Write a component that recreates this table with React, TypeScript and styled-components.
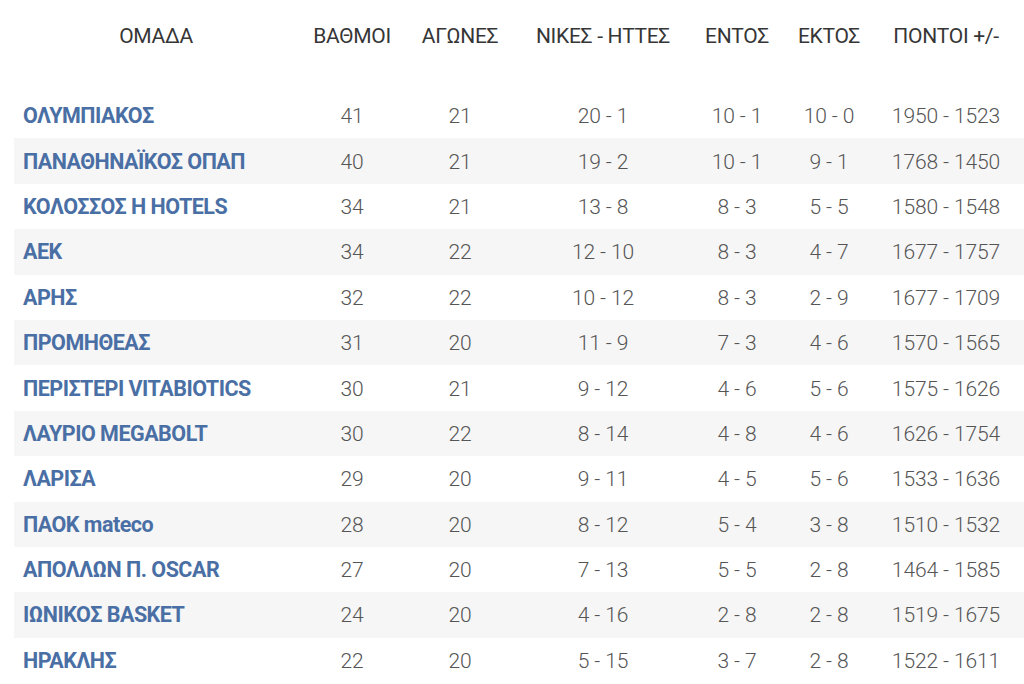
import * as React from 'react';
import styled, { createGlobalStyle } from 'styled-components';

const GlobalStyle = createGlobalStyle`
  html, body {
    margin: 0;
    padding: 0;
    background: #ffffff;
    overflow: hidden;
  }
  body {
    font-family: Roboto, "Liberation Sans", sans-serif;
  }
`

const Wrapper = styled.div`
  padding-left: 14px;
  width: 1010px;
`
const Table = styled.table`
  width: 100%;
  border-collapse: collapse;
  table-layout: fixed;
`
const HeadCell = styled.th<{ $last?: boolean }>`
  padding: 24px ${p => (p.$last ? '8px' : '0')} 45px 0;
  height: 24px;
  line-height: 24px;
  font-size: 21px;
  font-weight: 400;
  color: #363636;
  text-align: center;
  white-space: nowrap;
  letter-spacing: -0.3px;
`
const Row = styled.tr<{ $striped: boolean }>`
  height: 45.4px;
  background: ${p => (p.$striped ? '#f6f6f6' : 'transparent')};
`
const TeamCell = styled.td`
  padding: 0 0 0 9px;
  font-size: 21.5px;
  font-weight: 700;
  color: #4a6fa5;
  white-space: nowrap;
  letter-spacing: -0.5px;
`
const NumCell = styled.td<{ $last?: boolean }>`
  padding: 1px ${p => (p.$last ? '8px' : '0')} 0 0;
  font-size: 21px;
  font-weight: 300;
  color: #555555;
  text-align: center;
  white-space: nowrap;
  letter-spacing: -0.1px;
`

const columns = [
  { label: 'ΟΜΑΔΑ', width: 284 },
  { label: 'ΒΑΘΜΟΙ', width: 108 },
  { label: 'ΑΓΩΝΕΣ', width: 108 },
  { label: 'ΝΙΚΕΣ - ΗΤΤΕΣ', width: 178 },
  { label: 'ΕΝΤΟΣ', width: 90 },
  { label: 'ΕΚΤΟΣ', width: 94 },
  { label: 'ΠΟΝΤΟΙ +/-', width: 148 },
];

const teams: string[][] = [
  ['ΟΛΥΜΠΙΑΚΟΣ', '41', '21', '20 - 1', '10 - 1', '10 - 0', '1950 - 1523'],
  ['ΠΑΝΑΘΗΝΑΪΚΟΣ ΟΠΑΠ', '40', '21', '19 - 2', '10 - 1', '9 - 1', '1768 - 1450'],
  ['ΚΟΛΟΣΣΟΣ H HOTELS', '34', '21', '13 - 8', '8 - 3', '5 - 5', '1580 - 1548'],
  ['ΑΕΚ', '34', '22', '12 - 10', '8 - 3', '4 - 7', '1677 - 1757'],
  ['ΑΡΗΣ', '32', '22', '10 - 12', '8 - 3', '2 - 9', '1677 - 1709'],
  ['ΠΡΟΜΗΘΕΑΣ', '31', '20', '11 - 9', '7 - 3', '4 - 6', '1570 - 1565'],
  ['ΠΕΡΙΣΤΕΡΙ VITABIOTICS', '30', '21', '9 - 12', '4 - 6', '5 - 6', '1575 - 1626'],
  ['ΛΑΥΡΙΟ MEGABOLT', '30', '22', '8 - 14', '4 - 8', '4 - 6', '1626 - 1754'],
  ['ΛΑΡΙΣΑ', '29', '20', '9 - 11', '4 - 5', '5 - 6', '1533 - 1636'],
  ['ΠΑΟΚ mateco', '28', '20', '8 - 12', '5 - 4', '3 - 8', '1510 - 1532'],
  ['ΑΠΟΛΛΩΝ Π. OSCAR', '27', '20', '7 - 13', '5 - 5', '2 - 8', '1464 - 1585'],
  ['ΙΩΝΙΚΟΣ BASKET', '24', '20', '4 - 16', '2 - 8', '2 - 8', '1519 - 1675'],
  ['ΗΡΑΚΛΗΣ', '22', '20', '5 - 15', '3 - 7', '2 - 8', '1522 - 1611'],
];

const App: React.FC = () => {
  return (
    <Wrapper>
      <GlobalStyle />
      <Table>
        <colgroup>
          {columns.map(c => <col key={c.label} style={{ width: c.width }} />)}
        </colgroup>
        <thead>
          <tr>
            {columns.map((c, i) => (
              <HeadCell key={c.label} $last={i === columns.length - 1}>{c.label}</HeadCell>
            ))}
          </tr>
        </thead>
        <tbody>
          {teams.map(([name, ...stats], i) => (
            <Row key={name} $striped={i % 2 === 1}>
              <TeamCell>{name}</TeamCell>
              {stats.map((s, j) => (
                <NumCell key={j} $last={j === stats.length - 1}>{s}</NumCell>
              ))}
            </Row>
          ))}
        </tbody>
      </Table>
    </Wrapper>
  )
}

export default App;
